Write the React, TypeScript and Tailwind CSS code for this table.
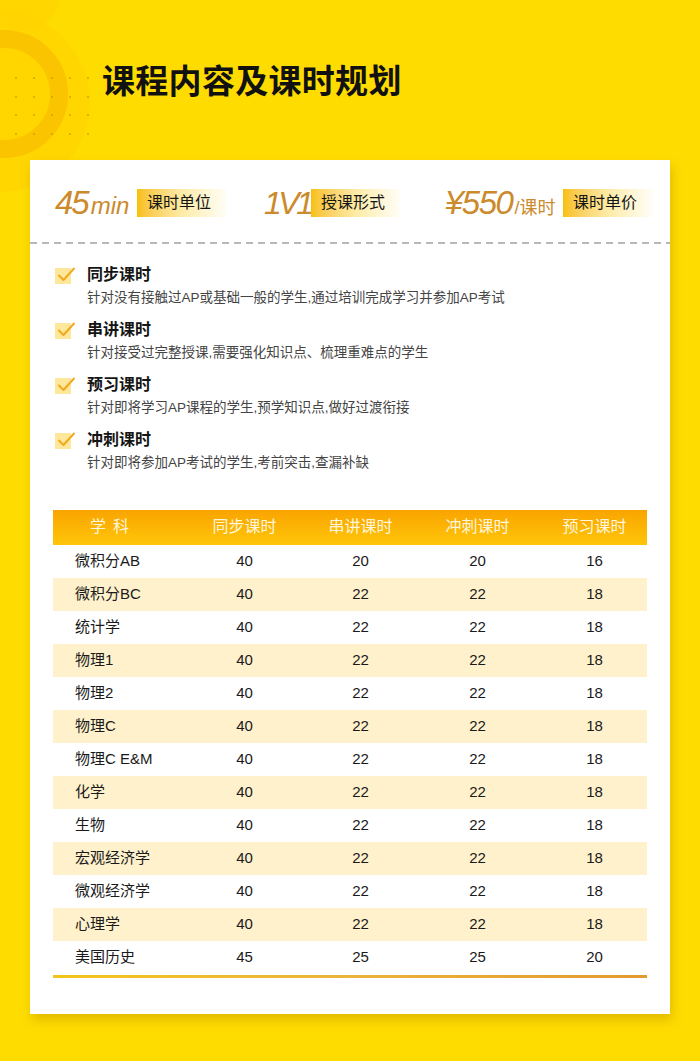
import type { ReactNode } from 'react';

const FONT = '"Liberation Sans", "Noto Sans CJK SC", sans-serif';

type Course = {
    readonly title: string;
    readonly desc: string;
};

const courses: Course[] = [
    { title: '同步课时', desc: '针对没有接触过AP或基础一般的学生,通过培训完成学习并参加AP考试' },
    { title: '串讲课时', desc: '针对接受过完整授课,需要强化知识点、梳理重难点的学生' },
    { title: '预习课时', desc: '针对即将学习AP课程的学生,预学知识点,做好过渡衔接' },
    { title: '冲刺课时', desc: '针对即将参加AP考试的学生,考前突击,查漏补缺' },
];

// 学科, 同步, 串讲, 冲刺, 预习
const rows: [string, number, number, number, number][] = [
    ['微积分AB', 40, 20, 20, 16],
    ['微积分BC', 40, 22, 22, 18],
    ['统计学', 40, 22, 22, 18],
    ['物理1', 40, 22, 22, 18],
    ['物理2', 40, 22, 22, 18],
    ['物理C', 40, 22, 22, 18],
    ['物理C E&M', 40, 22, 22, 18],
    ['化学', 40, 22, 22, 18],
    ['生物', 40, 22, 22, 18],
    ['宏观经济学', 40, 22, 22, 18],
    ['微观经济学', 40, 22, 22, 18],
    ['心理学', 40, 22, 22, 18],
    ['美国历史', 45, 25, 25, 20],
];

function Tag({ children }: { children: ReactNode }) {
    return (
        <span className="flex h-[28px] w-[90px] items-center bg-gradient-to-r from-[#F8C000] via-[#FDEBA6] to-[#FFFEF8] pl-[10px] text-[16px] text-[#151515]">
            {children}
        </span>
    );
}

function CheckBox() {
    return (
        <span className="relative block h-[20px] w-[22px] shrink-0">
            <span className="absolute left-0 top-[3px] h-[16px] w-[16px] bg-[#FCE79A]" />
            <svg className="absolute left-0 top-0" width="22" height="20" viewBox="0 0 22 20">
                <path
                    d="M4 10.5 L8.5 15 L19 3.5"
                    fill="none"
                    stroke="#F3A91E"
                    strokeWidth="2"
                    strokeLinecap="round"
                    strokeLinejoin="round"
                />
            </svg>
        </span>
    );
}

function Decoration() {
    const dots = [];
    for (let r = 0; r < 4; r++) {
        for (let c = 0; c < 5; c++) {
            dots.push(<span key={`${r}-${c}`} className="h-[2px] w-[2px] rounded-full bg-[#C99A00]/80" />);
        }
    }
    return (
        <>
            <div className="absolute left-[-90px] top-[12px] h-[180px] w-[180px] rounded-full bg-[#FFCF00]/50" />
            <div className="absolute left-[-60px] top-[30px] h-[128px] w-[128px] rounded-full border-[18px] border-[#F9B800]/60" />
            <div className="absolute left-[-10px] top-[-40px] h-[70px] w-[70px] rounded-full bg-[#FFD200]/60" />
            <div className="absolute left-[15px] top-[77px] grid grid-cols-[repeat(5,2px)] gap-x-[16px] gap-y-[16.5px]">
                {dots}
            </div>
        </>
    );
}

export default function App() {
    return (
        <div
            className="relative min-h-[1061px] w-[700px] overflow-hidden bg-[#FFDC00]"
            style={{ fontFamily: FONT }}
        >
            <Decoration />

            <h1 className="relative pl-[102px] pt-[62px] text-[33px] font-bold leading-[40px] tracking-[0.3px] text-[#111]">
                课程内容及课时规划
            </h1>

            <section className="relative mx-[30px] mt-[58px] bg-white pb-[36px] pt-[26px] shadow-[2px_6px_10px_rgba(170,130,0,0.35)]">
                <div className="flex h-[34px] items-center pl-[25px]">
                    <div className="flex items-center">
                        <span className="flex w-[76px] items-baseline italic text-[#CB8A2C]">
                            <span className="text-[33px] tracking-[-2px]">45</span>
                            <span className="ml-[3px] text-[24px]">min</span>
                        </span>
                        <span className="ml-[6px]">
                            <Tag>课时单位</Tag>
                        </span>
                    </div>
                    <div className="ml-[37px] flex items-center">
                        <span className="w-[44px] text-[32px] italic tracking-[-3.5px] text-[#CB8A2C]">1V1</span>
                        <span className="ml-[3px]">
                            <Tag>授课形式</Tag>
                        </span>
                    </div>
                    <div className="ml-[44px] flex items-center">
                        <span className="flex w-[111px] items-baseline italic text-[#CB8A2C]">
                            <span className="text-[33px] tracking-[-1.5px]">¥550</span>
                            <span className="ml-[2px] text-[18px] not-italic">/课时</span>
                        </span>
                        <span className="ml-[7px]">
                            <Tag>课时单价</Tag>
                        </span>
                    </div>
                </div>

                <div className="mt-[22px] h-[1.5px] bg-[repeating-linear-gradient(90deg,#B8B8B8_0_7px,transparent_7px_12px)]" />

                <ul className="mt-[19px] flex flex-col gap-[9px] pl-[25px]">
                    {courses.map((c) => (
                        <li key={c.title} className="flex flex-col">
                            <div className="flex h-[24px] items-center">
                                <CheckBox />
                                <span className="ml-[10px] text-[16px] font-bold text-[#151515]">{c.title}</span>
                            </div>
                            <p className="pl-[32px] text-[13.5px] leading-[22px] text-[#444]">{c.desc}</p>
                        </li>
                    ))}
                </ul>

                <div className="mx-[23px] mt-[36px]">
                    <div className="grid h-[35px] grid-cols-[134px_115px_117px_117px_1fr] items-center bg-gradient-to-b from-[#F9A400] to-[#FFC60A] text-[16px] text-[#FFF6DC]">
                        <span className="pl-[37px] tracking-[7px]">学科</span>
                        <span className="text-center">同步课时</span>
                        <span className="text-center">串讲课时</span>
                        <span className="text-center">冲刺课时</span>
                        <span className="pl-[6px] text-center">预习课时</span>
                    </div>
                    {rows.map((r, i) => (
                        <div
                            key={r[0]}
                            className={`grid h-[33px] grid-cols-[134px_115px_117px_117px_1fr] items-center text-[15px] text-[#1a1a1a] ${
                                i % 2 === 1 ? 'bg-[#FEF1CC]' : 'bg-white'
                            }`}
                        >
                            <span className="pl-[22px]">{r[0]}</span>
                            <span className="text-center">{r[1]}</span>
                            <span className="text-center">{r[2]}</span>
                            <span className="text-center">{r[3]}</span>
                            <span className="pl-[6px] text-center">{r[4]}</span>
                        </div>
                    ))}
                    <div className="mt-[1px] h-[3px] bg-gradient-to-r from-[#F3C51C] via-[#EBB43A] to-[#E39A2E]" />
                </div>
            </section>
        </div>
    );
}
